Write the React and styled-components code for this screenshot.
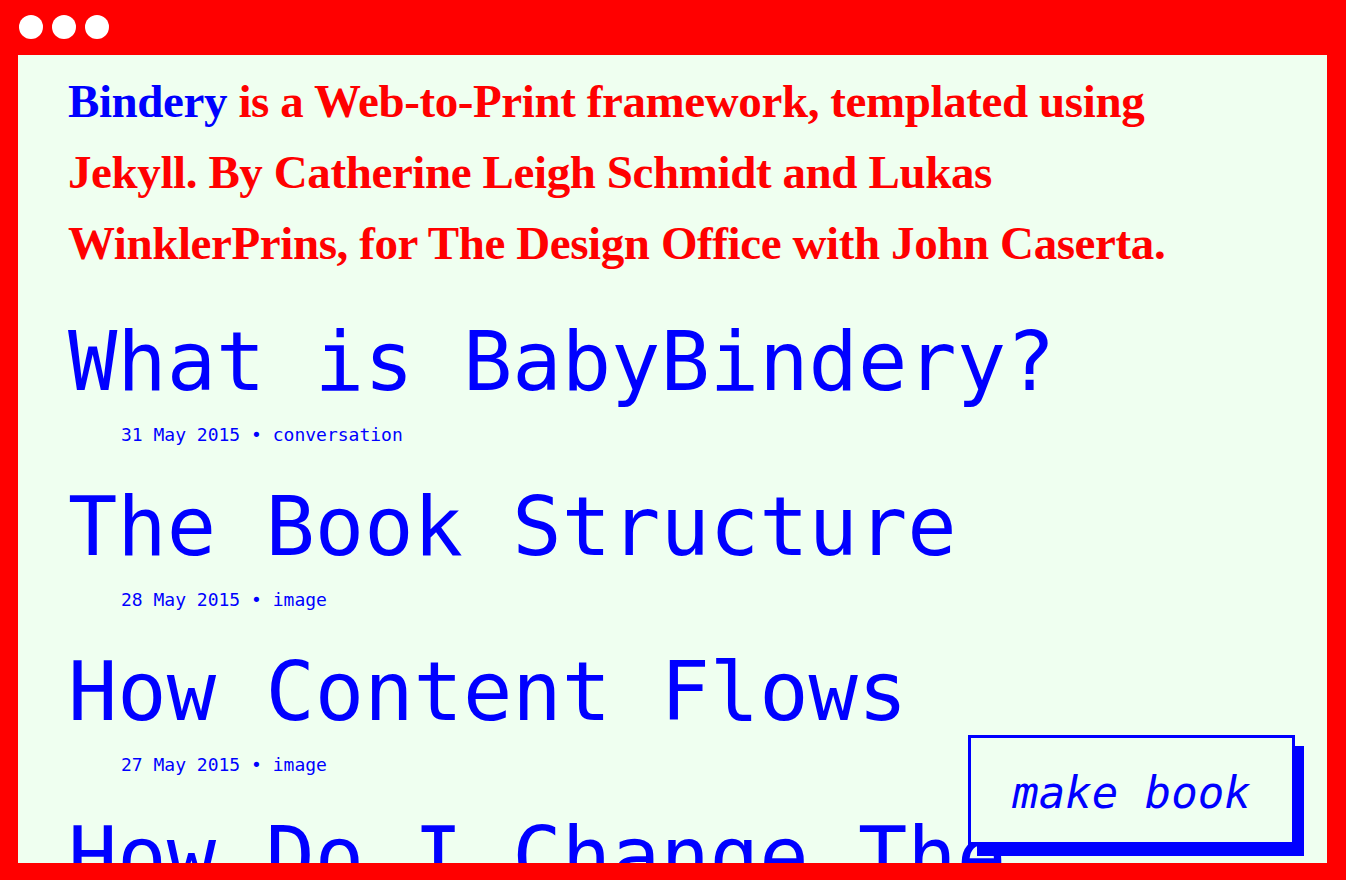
import React from 'react';
import styled, { createGlobalStyle } from 'styled-components';

const Global = createGlobalStyle`
  html, body {
    margin: 0;
    padding: 0;
    background: #ff0000;
  }
`;

const Frame = styled.div`
  position: relative;
  width: 1346px;
  height: 880px;
  background: #ff0000;
  display: flex;
  flex-direction: column;
  overflow: hidden;
`;

const TopBar = styled.div`
  height: 55px;
  flex: none;
  display: flex;
  align-items: center;
  gap: 9px;
  padding: 0 0 1px 19px;
  box-sizing: border-box;
`;

const Dot = styled.span`
  width: 24px;
  height: 24px;
  border-radius: 50%;
  background: #ffffff;
`;

const Page = styled.main`
  margin: 0 19px 17px 18px;
  flex: 1;
  background: #effff0;
  padding: 11px 50px 0 50px;
  overflow: hidden;
`;

const Intro = styled.p`
  margin: 0;
  font-family: "Liberation Serif", "Times New Roman", serif;
  font-weight: 700;
  font-size: 47px;
  line-height: 71px;
  color: #ff0000;
  letter-spacing: -0.4px;
  white-space: nowrap;
`;

const Name = styled.span`
  color: #0000ff;
`;

const Posts = styled.ul`
  list-style: none;
  margin: 42px 0 0;
  padding: 0;
  display: flex;
  flex-direction: column;
  gap: 41px;
`;

const Post = styled.li`
  display: flex;
  flex-direction: column;
  gap: 22px;
`;

const Title = styled.a`
  font-family: "DejaVu Sans Mono", "Liberation Mono", monospace;
  font-size: 82px;
  line-height: 82px;
  color: #0000ff;
  text-decoration: none;
`;

const Meta = styled.div`
  margin-left: 53px;
  font-family: "DejaVu Sans Mono", "Liberation Mono", monospace;
  font-size: 18px;
  line-height: 20px;
  color: #0000ff;
`;

const MakeBook = styled.button`
  position: absolute;
  left: 968px;
  top: 735px;
  width: 327px;
  height: 110px;
  box-sizing: border-box;
  border: 3px solid #0000ff;
  background: #effff0;
  box-shadow: 9px 11px 0 #0000ff;
  color: #0000ff;
  font-family: "DejaVu Sans Mono", "Liberation Mono", monospace;
  font-style: italic;
  font-size: 44px;
  padding: 4px 0 0;
  cursor: pointer;
  z-index: 2;
`;

const posts = [
  { title: 'What is BabyBindery?', date: '31 May 2015', kind: 'conversation' },
  { title: 'The Book Structure', date: '28 May 2015', kind: 'image' },
  { title: 'How Content Flows', date: '27 May 2015', kind: 'image' },
  { title: 'How Do I Change The Styles?', date: '26 May 2015', kind: 'text' },
];

export default function App() {
  return (
    <Frame>
      <Global />
      <TopBar>
        <Dot />
        <Dot />
        <Dot />
      </TopBar>
      <Page>
        <Intro>
          <Name>Bindery</Name> is a Web-to-Print framework, templated using
          <br />
          Jekyll. By Catherine Leigh Schmidt and Lukas
          <br />
          WinklerPrins, for The Design Office with John Caserta.
        </Intro>
        <Posts>
          {posts.map((p) => (
            <Post key={p.title}>
              <Title href="#">{p.title}</Title>
              <Meta>
                {p.date} • {p.kind}
              </Meta>
            </Post>
          ))}
        </Posts>
      </Page>
      <MakeBook>make book</MakeBook>
    </Frame>
  );
}
